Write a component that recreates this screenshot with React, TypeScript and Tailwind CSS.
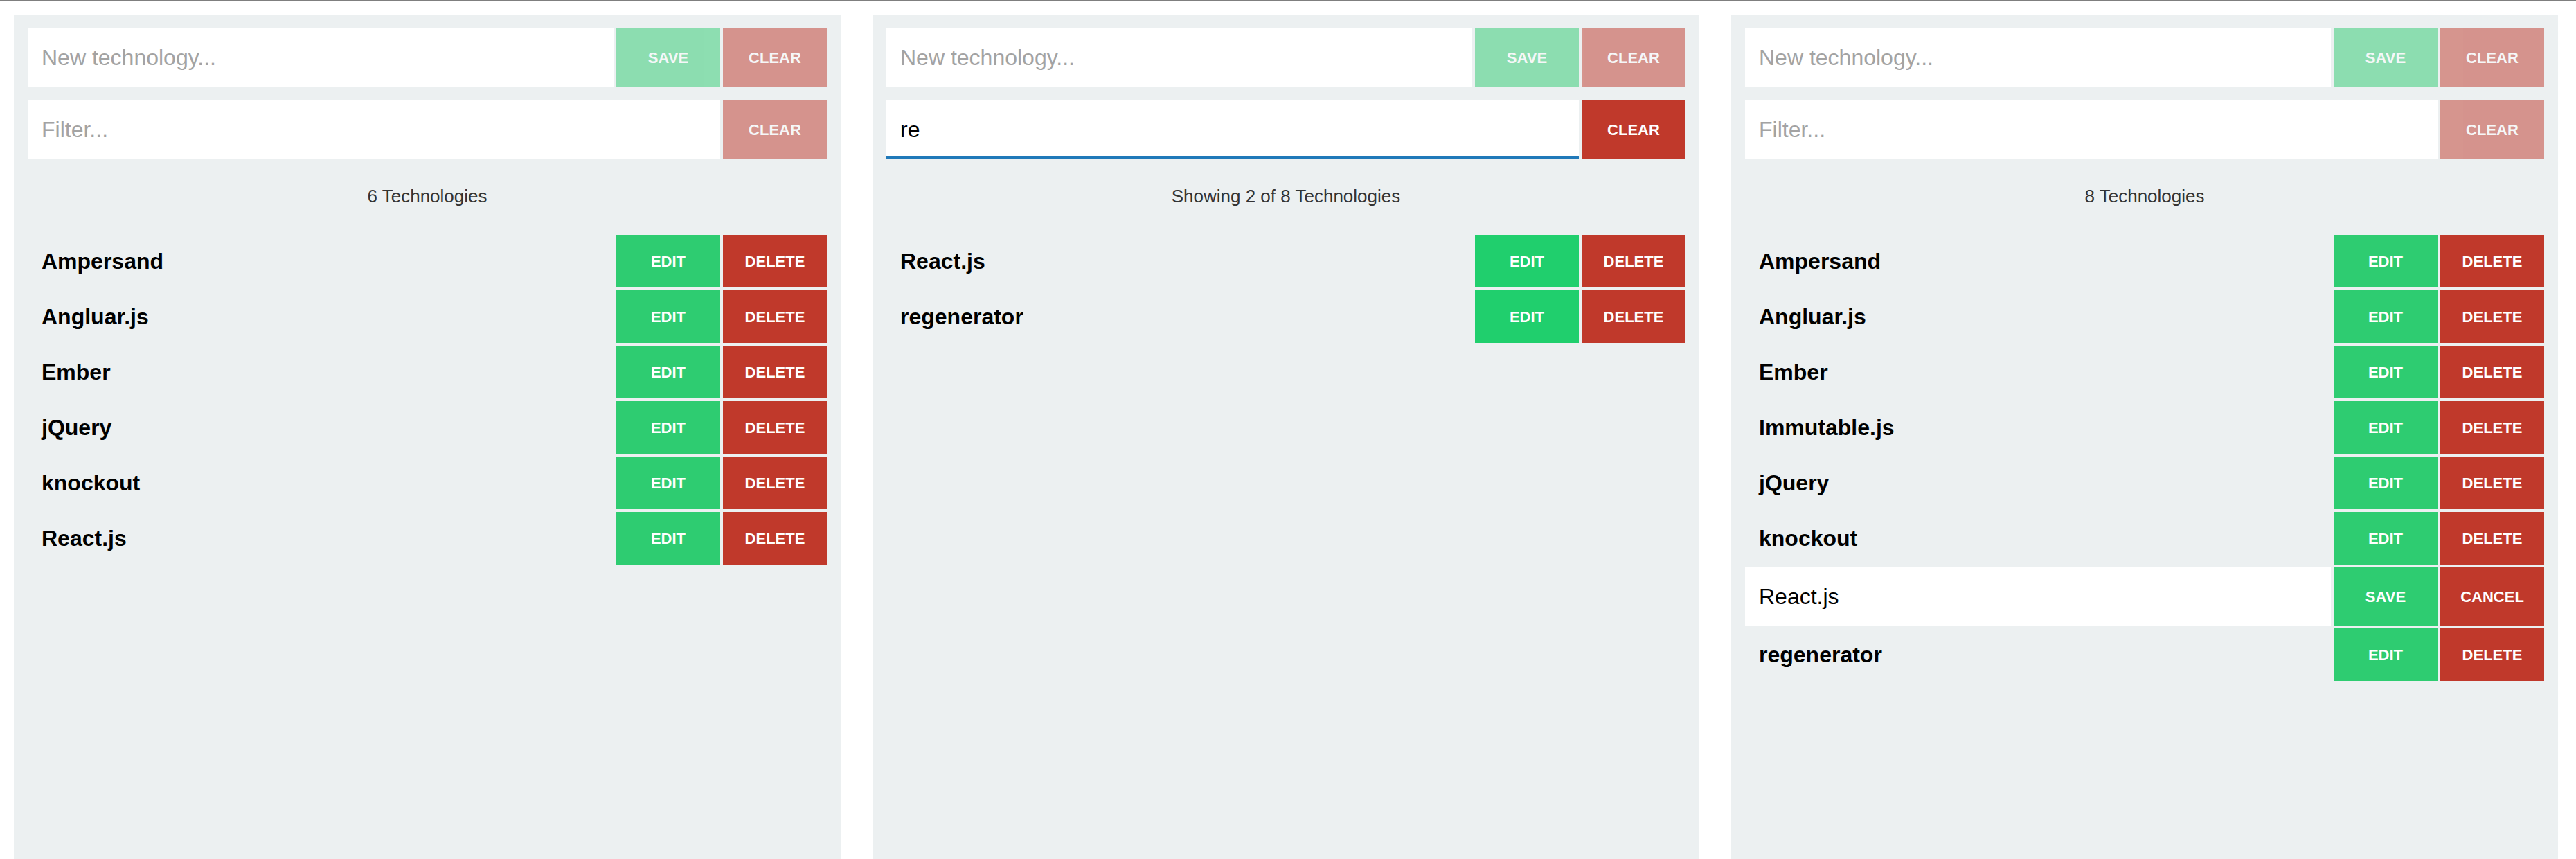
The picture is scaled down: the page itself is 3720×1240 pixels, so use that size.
import React from "react";

type Item = { name: string; editing?: boolean };

const GREEN = "bg-[#2ecc71]";
const GREEN2 = "bg-[#20cf6d]";
const RED = "bg-[#c0392b]";

function Btn({ label, color, disabled }: { label: string; color: string; disabled?: boolean }) {
  return (
    <button
      className={`w-[150px] shrink-0 h-full ${color} text-white font-bold text-[22px] uppercase flex items-center justify-center ${disabled ? "opacity-50" : ""}`}
    >
      {label}
    </button>
  );
}

function Panel({
  filter,
  count,
  items,
  green,
}: {
  filter: string;
  count: string;
  items: Item[];
  green: string;
}) {
  const filterActive = filter.length > 0;
  return (
    <div className="flex-1 bg-[#ecf0f1] p-[20px] flex flex-col">
      <div className="flex gap-[4px] h-[84px]">
        <input
          readOnly
          placeholder="New technology..."
          className="flex-1 min-w-0 bg-white px-[20px] text-[32px] text-black placeholder:text-[#a3a3a3] outline-none"
        />
        <Btn label="Save" color={GREEN} disabled />
        <Btn label="Clear" color={RED} disabled />
      </div>
      <div className="flex gap-[4px] h-[84px] mt-[20px]">
        <input
          readOnly
          value={filter}
          placeholder="Filter..."
          className={`flex-1 min-w-0 bg-white px-[20px] text-[32px] text-black placeholder:text-[#a3a3a3] outline-none ${
            filterActive ? "border-b-4 border-[#2079b9] pt-[4px]" : ""
          }`}
        />
        <Btn label="Clear" color={RED} disabled={!filterActive} />
      </div>
      <div className="text-center text-[26px] leading-[30px] text-[#333333] pt-[39px] pb-[41px]">{count}</div>
      <div className="flex flex-col gap-[4px]">
        {items.map((it) =>
          it.editing ? (
            <div key={it.name} className="flex gap-[4px] h-[84px]">
              <input
                readOnly
                value={it.name}
                className="flex-1 min-w-0 bg-white px-[20px] text-[32px] text-black outline-none"
              />
              <Btn label="Save" color={GREEN} />
              <Btn label="Cancel" color={RED} />
            </div>
          ) : (
            <div key={it.name} className="flex gap-[4px] h-[76px] items-center">
              <div className="flex-1 min-w-0 px-[20px] text-[32px] font-bold text-black">{it.name}</div>
              <Btn label="Edit" color={green} />
              <Btn label="Delete" color={RED} />
            </div>
          )
        )}
      </div>
    </div>
  );
}

export default function App() {
  return (
    <div className="w-[3720px] h-[1240px] bg-white border-t border-[#7f7f7f] overflow-hidden flex font-['Liberation_Sans',Arial,sans-serif]">
      <div className="w-[1240px] shrink-0 pl-[20px] pr-[26px] pt-[20px] flex">
        <Panel
          filter=""
          count="6 Technologies"
          green={GREEN}
          items={[
            { name: "Ampersand" },
            { name: "Angluar.js" },
            { name: "Ember" },
            { name: "jQuery" },
            { name: "knockout" },
            { name: "React.js" },
          ]}
        />
      </div>
      <div className="w-[1240px] shrink-0 pl-[20px] pr-[26px] pt-[20px] flex">
        <Panel
          filter="re"
          count="Showing 2 of 8 Technologies"
          green={GREEN2}
          items={[{ name: "React.js" }, { name: "regenerator" }]}
        />
      </div>
      <div className="w-[1240px] shrink-0 pl-[20px] pr-[26px] pt-[20px] flex">
        <Panel
          filter=""
          count="8 Technologies"
          green={GREEN}
          items={[
            { name: "Ampersand" },
            { name: "Angluar.js" },
            { name: "Ember" },
            { name: "Immutable.js" },
            { name: "jQuery" },
            { name: "knockout" },
            { name: "React.js", editing: true },
            { name: "regenerator" },
          ]}
        />
      </div>
    </div>
  );
}
